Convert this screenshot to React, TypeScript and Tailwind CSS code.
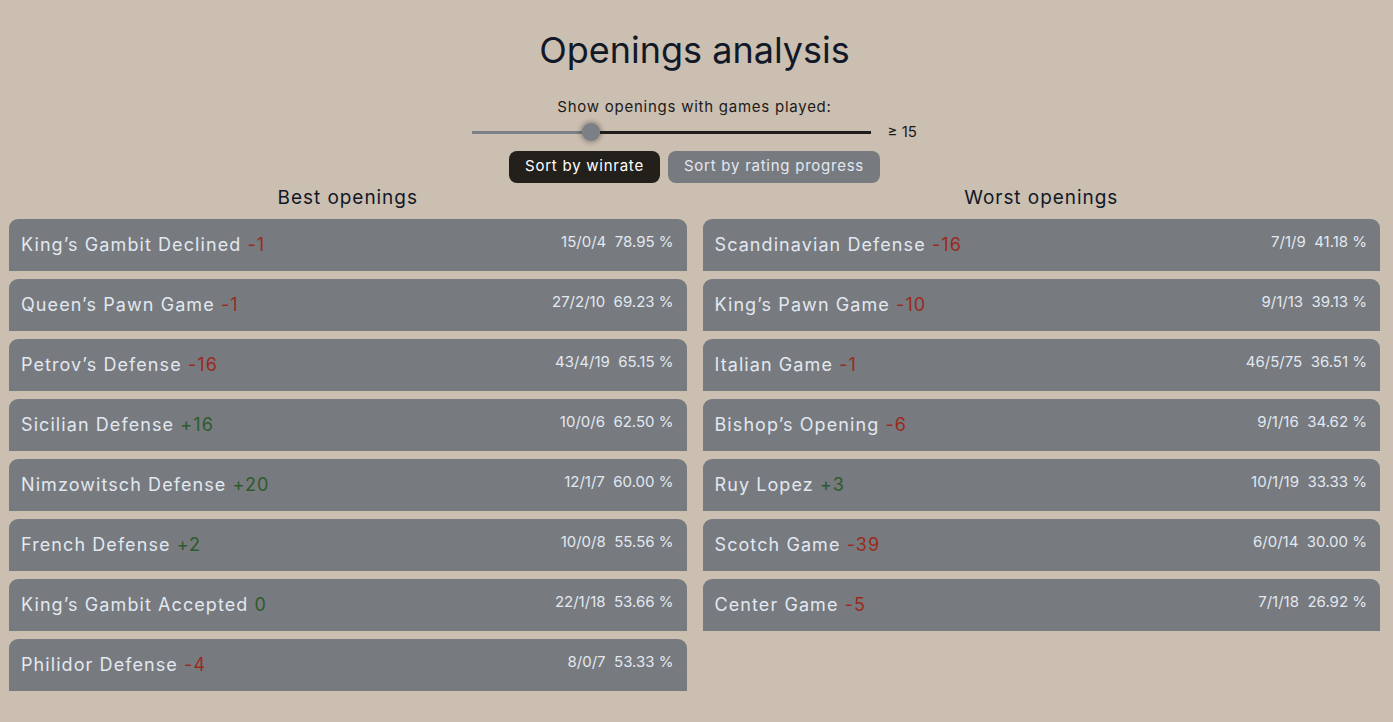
type Opening = { name: string; delta: number; record: string; rate: string };

const best: Opening[] = [
  { name: 'King’s Gambit Declined', delta: -1, record: '15/0/4', rate: '78.95 %' },
  { name: 'Queen’s Pawn Game', delta: -1, record: '27/2/10', rate: '69.23 %' },
  { name: 'Petrov’s Defense', delta: -16, record: '43/4/19', rate: '65.15 %' },
  { name: 'Sicilian Defense', delta: 16, record: '10/0/6', rate: '62.50 %' },
  { name: 'Nimzowitsch Defense', delta: 20, record: '12/1/7', rate: '60.00 %' },
  { name: 'French Defense', delta: 2, record: '10/0/8', rate: '55.56 %' },
  { name: 'King’s Gambit Accepted', delta: 0, record: '22/1/18', rate: '53.66 %' },
  { name: 'Philidor Defense', delta: -4, record: '8/0/7', rate: '53.33 %' },
];

const worst: Opening[] = [
  { name: 'Scandinavian Defense', delta: -16, record: '7/1/9', rate: '41.18 %' },
  { name: 'King’s Pawn Game', delta: -10, record: '9/1/13', rate: '39.13 %' },
  { name: 'Italian Game', delta: -1, record: '46/5/75', rate: '36.51 %' },
  { name: 'Bishop’s Opening', delta: -6, record: '9/1/16', rate: '34.62 %' },
  { name: 'Ruy Lopez', delta: 3, record: '10/1/19', rate: '33.33 %' },
  { name: 'Scotch Game', delta: -39, record: '6/0/14', rate: '30.00 %' },
  { name: 'Center Game', delta: -5, record: '7/1/18', rate: '26.92 %' },
];

function OpeningCard({ o }: { o: Opening }) {
  const positive = o.delta >= 0;
  const label = o.delta > 0 ? `+${o.delta}` : `${o.delta}`;
  return (
    <div className="flex h-[52px] items-center justify-between rounded-t-[9px] bg-[#777a7f] pl-[12px] pr-[13px]">
      <span className="text-[18px] tracking-[0.06em] text-[#e2e8f0]">
        {o.name} <span className={positive ? 'text-[#2e5a2c]' : 'text-[#9a2a1c]'}>{label}</span>
      </span>
      <span className="mb-[4px] text-[15px] text-[#e2e8f0]">
        {o.record}&nbsp;&nbsp;{o.rate}
      </span>
    </div>
  );
}

export default function App() {
  return (
    <div
      className="min-h-[722px] bg-[#cbbfb1] pl-[9px] pr-[13px] pt-[28px] text-[#111827]"
      style={{ fontFamily: 'Inter, "Open Sans", sans-serif' }}
    >
      <h1 className="text-center text-[36px] leading-[44px]">Openings analysis</h1>

      <div className="mt-[25px] text-center text-[15px] leading-[20px] tracking-[0.05em] text-[#1c1b1a]">
        Show openings with games played:
      </div>

      {/* slider */}
      <div className="mt-[4px] flex items-center justify-center">
        <div className="flex w-[399px] items-center">
          <div className="h-[3px] w-[110px] bg-[#7b7f86]" />
          <div className="h-[18px] w-[18px] rounded-full bg-[#7b7f86] shadow-[0_0_4px_2px_rgba(0,0,0,0.25)]" />
          <div className="h-[3px] flex-1 bg-[#1f1d1a]" />
        </div>
        <span className="ml-[17px] w-[30px] text-[15px] text-[#1c1b1a]">≥ 15</span>
      </div>

      <div className="mt-[7px] flex justify-center gap-[8px] text-[15px] tracking-[0.05em] text-[#e2e8f0]">
        <button className="h-[32px] w-[151px] rounded-[8px] bg-[#23201c] text-white">Sort by winrate</button>
        <button className="h-[32px] w-[212px] rounded-[8px] bg-[#777a7f]">Sort by rating progress</button>
      </div>

      <div className="mt-[1px] grid grid-cols-2 gap-[16px]">
        <div>
          <h2 className="mb-[8px] text-center text-[19px] leading-[27px] tracking-[0.05em]">Best openings</h2>
          <div className="flex flex-col gap-[8px]">
            {best.map((o) => (
              <OpeningCard key={o.name} o={o} />
            ))}
          </div>
        </div>
        <div>
          <h2 className="mb-[8px] text-center text-[19px] leading-[27px] tracking-[0.05em]">Worst openings</h2>
          <div className="flex flex-col gap-[8px]">
            {worst.map((o) => (
              <OpeningCard key={o.name} o={o} />
            ))}
          </div>
        </div>
      </div>
    </div>
  );
}
